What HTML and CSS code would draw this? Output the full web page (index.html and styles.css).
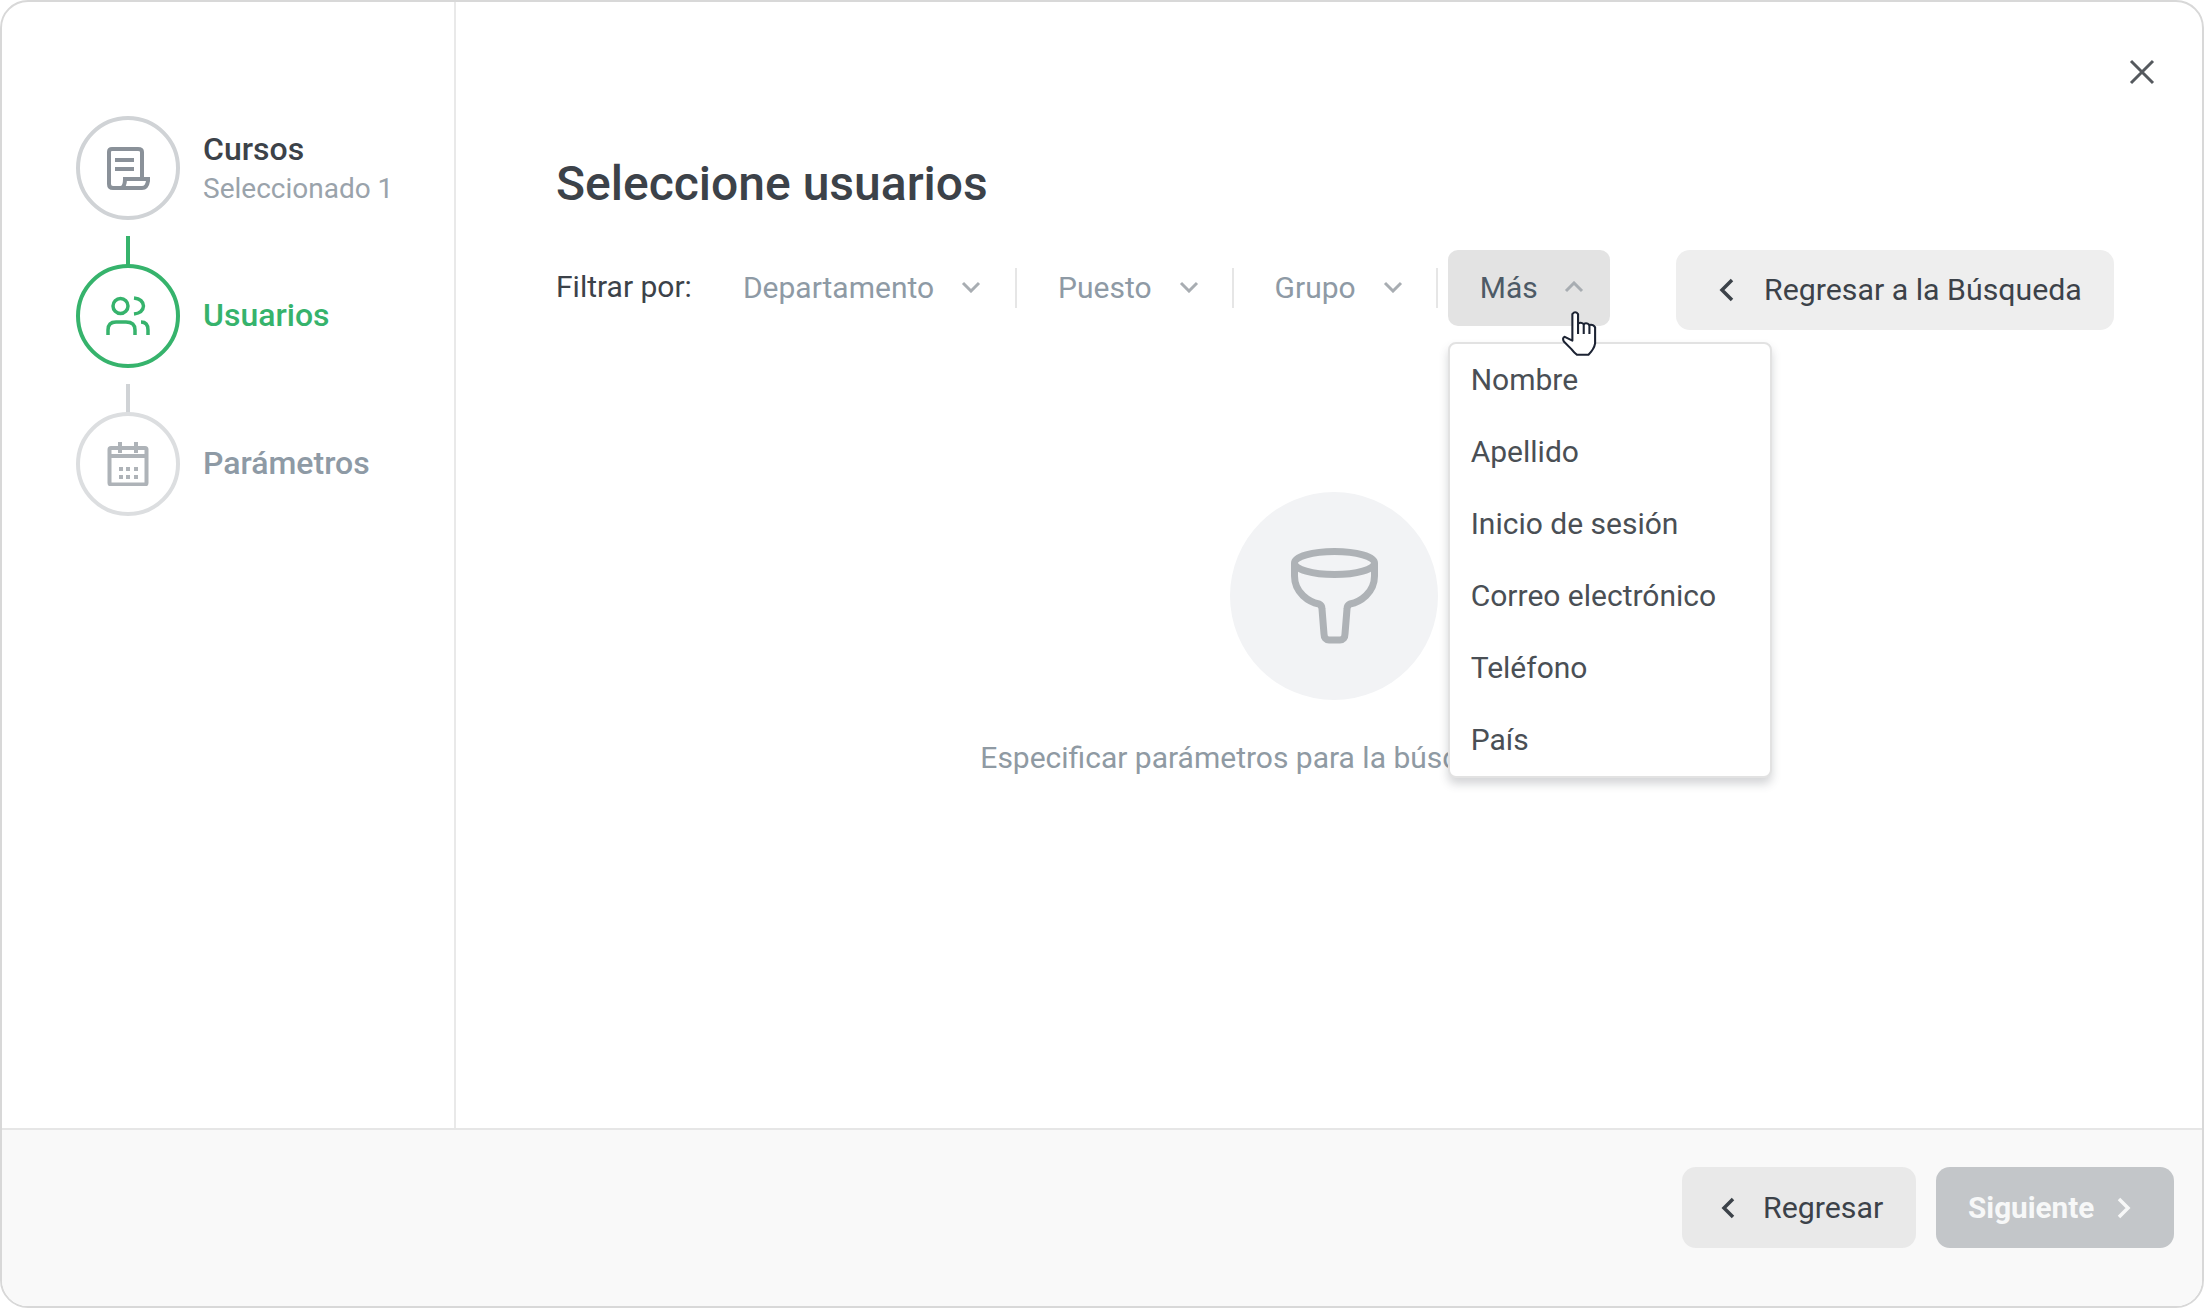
FILE: index.html
```html
<!DOCTYPE html>
<html lang="es">
<head>
<meta charset="utf-8">
<title>Seleccione usuarios</title>
<link rel="stylesheet" href="styles.css">
</head>
<body>
<div class="modal">
  <button class="close" aria-label="Cerrar">
    <svg viewBox="0 0 26 26" width="26" height="26"><path d="M2 2L24 24M24 2L2 24"/></svg>
  </button>
  <div class="main">
    <aside class="sidebar">
      <div class="step">
        <span class="ring">
          <svg class="icon icon-doc" viewBox="0 0 44 44" width="44" height="44"><path d="M18 42H7Q3 42 3 38V6Q3 3 6 3H32Q36 3 36 6V33M9 14H28M9 23H28"/><path d="M15 42Q19 41 19 33H42V35Q41 42 36 42Z"/></svg>
        </span>
        <div class="step-text step-text-double">
          <div class="step-title">Cursos</div>
          <div class="step-sub">Seleccionado 1</div>
        </div>
      </div>
      <div class="link link-green"></div>
      <div class="step step-active">
        <span class="ring">
          <svg class="icon icon-users" viewBox="0 0 44 44" width="44" height="44"><circle cx="14.5" cy="12" r="7.5"/><path d="M28 4Q37 5 37.5 12Q37 19 28 20M2 41V36Q2 28 10 28H20Q29 28 29 36V41M35 28Q42 28 42 36V41"/></svg>
        </span>
        <div class="step-text"><div class="step-title">Usuarios</div></div>
      </div>
      <div class="link"></div>
      <div class="step step-idle">
        <span class="ring">
          <svg class="icon icon-cal" viewBox="0 0 44 44" width="44" height="44"><rect x="3.5" y="6" width="37" height="36.5" rx="1.5"/><path d="M3.5 14H40.5M14 0V11M30 0V11"/><path class="dots" d="M13 25h4v4h-4zM20 25h4v4h-4zM28 25h4v4h-4zM13 33h4v4h-4zM20 33h4v4h-4zM28 33h4v4h-4z"/></svg>
        </span>
        <div class="step-text"><div class="step-title">Parámetros</div></div>
      </div>
    </aside>
    <section class="content">
      <h1 class="title">Seleccione usuarios</h1>
      <div class="filters">
        <span class="filter-label">Filtrar por:</span>
        <div class="filter filter-first">Departamento<svg class="chev" viewBox="0 0 20 12" width="20" height="12"><path d="M2 2L10 10L18 2"/></svg></div>
        <div class="filter">Puesto<svg class="chev" viewBox="0 0 20 12" width="20" height="12"><path d="M2 2L10 10L18 2"/></svg></div>
        <div class="filter">Grupo<svg class="chev" viewBox="0 0 20 12" width="20" height="12"><path d="M2 2L10 10L18 2"/></svg></div>
        <div class="more">
          <button class="more-btn">Más<svg class="chev" viewBox="0 0 20 12" width="20" height="12"><path d="M2 10L10 2L18 10"/></svg></button>
          <ul class="menu">
            <li>Nombre</li>
            <li>Apellido</li>
            <li>Inicio de sesión</li>
            <li>Correo electrónico</li>
            <li>Teléfono</li>
            <li>País</li>
          </ul>
          <svg class="cursor" viewBox="0 0 38 49" width="36" height="47"><path d="M12 4Q15 0 18 4V14Q21 12 24 14.500Q27 12.500 30 15.500Q34 14.500 36 18V35Q35 41 29 47H17Q14 45 11 41L3 33Q1 29 4 28L12 32Z"/><path d="M18 14V25M24 14.500V25M30 15.500V25"/></svg>
        </div>
        <button class="btn btn-search">
          <svg class="chev-side" viewBox="0 0 16 24" width="16" height="24"><path d="M13 2L3 12L13 22"/></svg>Regresar a la Búsqueda
        </button>
      </div>
      <div class="empty">
        <div class="empty-circle">
          <svg class="funnel" viewBox="0 0 87 96" width="87" height="96"><ellipse cx="43.500" cy="15" rx="40" ry="11.500"/><path d="M3.500 15V28C3.500 45 18 54 28 56C30 57 31 58 31 61L33 86C33 90 35 92 38 92H49C52 92 54 90 54 86L56 61C56 58 57 57 59 56C69 54 83.500 45 83.500 28V15"/></svg>
        </div>
        <p class="empty-text">Especificar parámetros para la búsqueda de usuarios</p>
      </div>
    </section>
  </div>
  <footer class="footer">
    <button class="btn btn-back"><svg class="chev-side" viewBox="0 0 14 22" width="14" height="22"><path d="M12 2L3 11L12 20"/></svg>Regresar</button>
    <button class="btn btn-next">Siguiente<svg class="chev-side" viewBox="0 0 14 22" width="14" height="22"><path d="M2 2L11 11L2 20"/></svg></button>
  </footer>
</div>
</body>
</html>
```

FILE: styles.css
```css
* { box-sizing: border-box; }
html, body { margin: 0; padding: 0; background: #fff; }
body { font-family: Roboto, "Liberation Sans", sans-serif; color: #3c4249; }
button { font-family: inherit; border: 0; cursor: pointer; }

.modal {
  position: relative;
  width: 2204px;
  height: 1308px;
  display: flex;
  flex-direction: column;
  border: 2px solid #d8d8d8;
  border-radius: 28px;
  overflow: hidden;
  background: #fff;
}
.close {
  position: absolute;
  top: 57px;
  right: 47px;
  width: 26px;
  height: 26px;
  padding: 0;
  background: none;
  line-height: 0;
}
.close path { stroke: #55595e; stroke-width: 3; fill: none; }

.main { flex: 1; display: flex; min-height: 0; }

.sidebar {
  width: 454px;
  flex: none;
  border-right: 2px solid #e9e9e9;
  padding: 114px 0 0 74px;
  display: flex;
  flex-direction: column;
}
.step { display: flex; align-items: center; gap: 23px; height: 104px; }
.step-text { padding-bottom: 2px; }
.step-text-double { padding: 1px 0 0; }
.ring {
  width: 104px;
  height: 104px;
  flex: none;
  border: 4px solid #d0d3d6;
  border-radius: 50%;
  display: flex;
  align-items: center;
  justify-content: center;
}
.icon { fill: none; stroke-width: 4; }
.icon-doc { stroke: #8a9199; }
.icon-users { stroke: #36b36c; stroke-width: 3.500; }
.icon-cal { stroke: #aeb3b8; }
.icon-cal .dots { fill: #aeb3b8; stroke: none; }
.step-title { font-size: 32px; font-weight: 500; line-height: 38px; color: #3c4249; }
.step-sub { font-size: 28px; line-height: 38px; margin-top: 2px; color: #9aa3ab; }
.step-active .ring { border-color: #36b36c; }
.step-active .step-title { color: #36b36c; }
.step-idle .ring { border-color: #dcdee0; }
.step-idle .step-title { color: #8e9aa5; }
.link { width: 4px; height: 30px; margin: 16px 0 -2px 50px; background: #d0d3d6; }
.link-green { background: #36b36c; }

.content { flex: 1; min-width: 0; padding: 0 88px 0 100px; }
.title { margin: 155px 0 0; font-size: 48px; line-height: 54px; font-weight: 500; color: #3c4249; }

.filters { display: flex; align-items: flex-start; margin-top: 39px; font-size: 30px; }
.filter-label { height: 40px; line-height: 40px; margin-top: 17px; color: #3c4249; }
.filter {
  display: flex;
  align-items: center;
  gap: 27px;
  height: 40px;
  margin-top: 18px;
  padding: 0 33px 2px 41px;
  border-right: 2px solid #e6e6e6;
  color: #8e9aa5;
}
.filter-first { padding: 0 34px 2px 51px; }
.chev { fill: none; stroke: #a8adb2; stroke-width: 3; flex: none; }
.more { position: relative; margin-left: 10px; }
.more-btn {
  display: flex;
  align-items: center;
  gap: 26px;
  height: 76px;
  padding: 0 26px 2px 32px;
  background: #e3e3e3;
  border-radius: 10px;
  font-size: 30px;
  color: #4d5a66;
}
.menu {
  position: absolute;
  top: 92px;
  left: 0;
  width: 324px;
  margin: 0;
  padding: 0;
  list-style: none;
  background: #fff;
  border: 2px solid #e2e2e2;
  border-radius: 8px;
  box-shadow: 0 6px 10px rgba(60, 66, 73, .22);
  z-index: 2;
}
.menu li { height: 72px; line-height: 72px; padding-left: 21px; font-size: 30px; color: #4a4f55; }
.cursor {
  position: absolute;
  left: 113px;
  top: 60px;
  z-index: 3;
}
.cursor path { fill: #fff; stroke: #1c2333; stroke-width: 2.200; stroke-linejoin: round; }

.btn {
  display: flex;
  align-items: center;
  height: 80px;
  border-radius: 14px;
  font-size: 30.300px;
  color: #3c4249;
}
.chev-side { fill: none; stroke: currentColor; stroke-width: 3.500; flex: none; }
.btn-search { margin-left: auto; width: 438px; padding: 0 0 1px 43px; gap: 29px; background: #eeeeee; }

.empty { display: flex; flex-direction: column; align-items: center; margin-top: 162px; padding-right: 2px; }
.empty-circle {
  width: 208px;
  height: 208px;
  border-radius: 50%;
  background: #f2f3f5;
  display: flex;
  align-items: center;
  justify-content: center;
}
.funnel { fill: none; stroke: #aeb2b6; stroke-width: 7; }
.empty-text { margin: 38px 0 0; font-size: 30px; line-height: 40px; color: #8f9aa3; }

.footer {
  height: 178px;
  flex: none;
  display: flex;
  justify-content: flex-end;
  align-items: flex-start;
  gap: 20px;
  padding: 37px 28px 0 0;
  background: #f9f9f9;
  border-top: 2px solid #e6e6e6;
}
.btn-back { width: 234px; height: 81px; padding-left: 39px; gap: 28px; background: #e9e9e9; }
.btn-next { width: 238px; height: 81px; padding-left: 32px; gap: 23px; background: #c3c6c9; color: #f7f8f8; font-weight: 700; font-size: 29.700px; }
```
